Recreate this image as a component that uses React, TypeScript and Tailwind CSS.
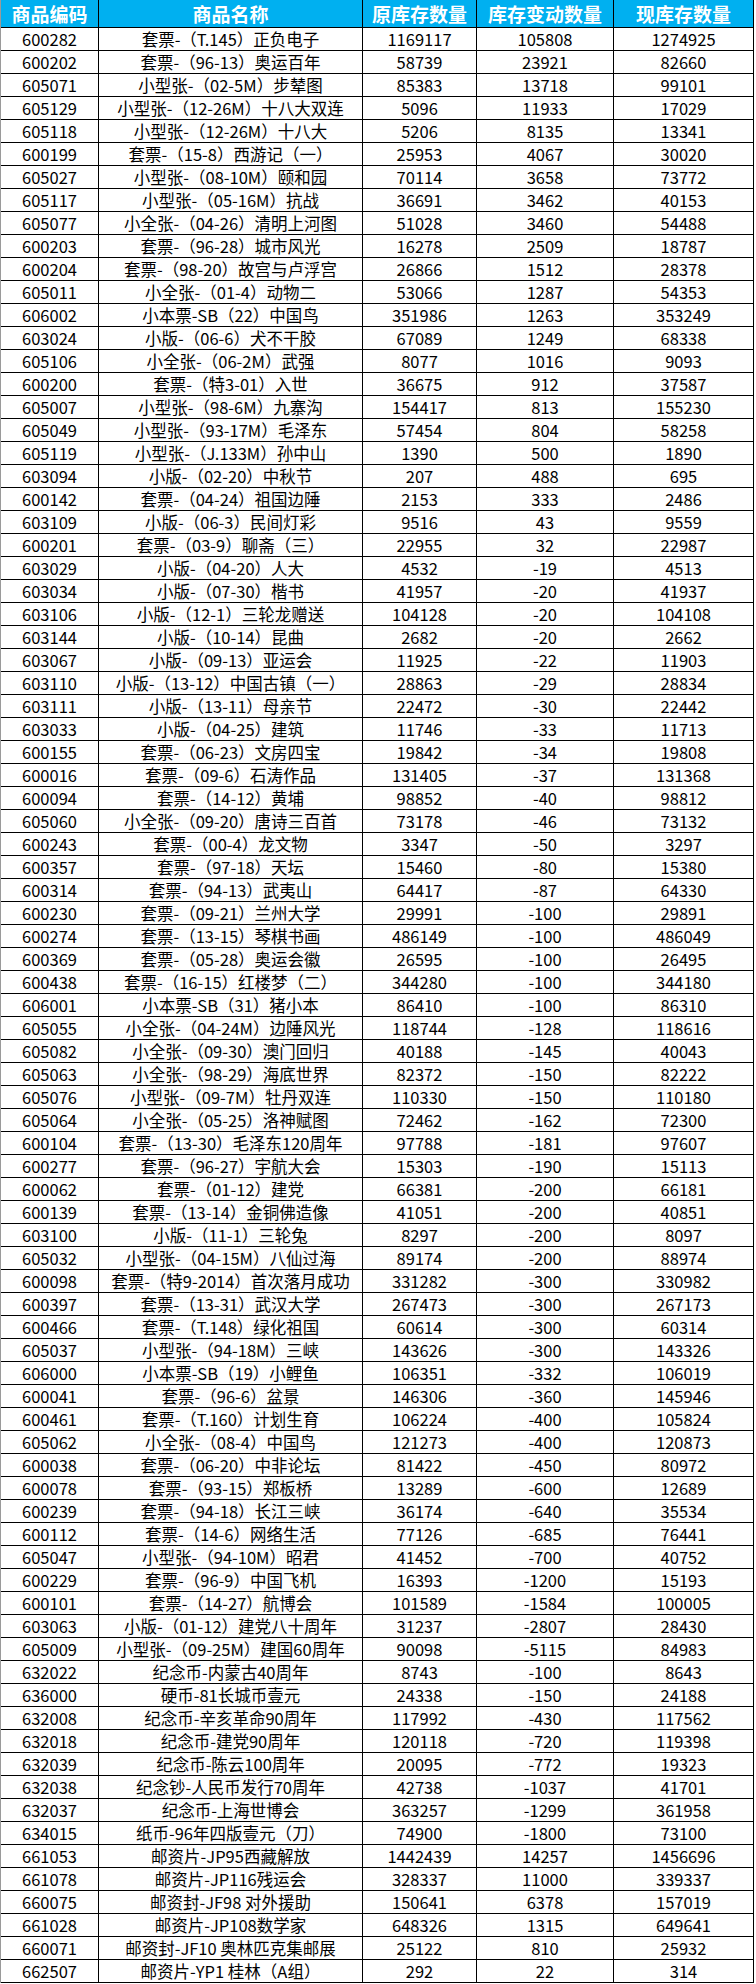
const rows: [string, string, number, number, number][] = [
  ['600282', '套票-（T.145）正负电子', 1169117, 105808, 1274925],
  ['600202', '套票-（96-13）奥运百年', 58739, 23921, 82660],
  ['605071', '小型张-（02-5M）步辇图', 85383, 13718, 99101],
  ['605129', '小型张-（12-26M）十八大双连', 5096, 11933, 17029],
  ['605118', '小型张-（12-26M）十八大', 5206, 8135, 13341],
  ['600199', '套票-（15-8）西游记（一）', 25953, 4067, 30020],
  ['605027', '小型张-（08-10M）颐和园', 70114, 3658, 73772],
  ['605117', '小型张-（05-16M）抗战', 36691, 3462, 40153],
  ['605077', '小全张-（04-26）清明上河图', 51028, 3460, 54488],
  ['600203', '套票-（96-28）城市风光', 16278, 2509, 18787],
  ['600204', '套票-（98-20）故宫与卢浮宫', 26866, 1512, 28378],
  ['605011', '小全张-（01-4）动物二', 53066, 1287, 54353],
  ['606002', '小本票-SB（22）中国鸟', 351986, 1263, 353249],
  ['603024', '小版-（06-6）犬不干胶', 67089, 1249, 68338],
  ['605106', '小全张-（06-2M）武强', 8077, 1016, 9093],
  ['600200', '套票-（特3-01）入世', 36675, 912, 37587],
  ['605007', '小型张-（98-6M）九寨沟', 154417, 813, 155230],
  ['605049', '小型张-（93-17M）毛泽东', 57454, 804, 58258],
  ['605119', '小型张-（J.133M）孙中山', 1390, 500, 1890],
  ['603094', '小版-（02-20）中秋节', 207, 488, 695],
  ['600142', '套票-（04-24）祖国边陲', 2153, 333, 2486],
  ['603109', '小版-（06-3）民间灯彩', 9516, 43, 9559],
  ['600201', '套票-（03-9）聊斋（三）', 22955, 32, 22987],
  ['603029', '小版-（04-20）人大', 4532, -19, 4513],
  ['603034', '小版-（07-30）楷书', 41957, -20, 41937],
  ['603106', '小版-（12-1）三轮龙赠送', 104128, -20, 104108],
  ['603144', '小版-（10-14）昆曲', 2682, -20, 2662],
  ['603067', '小版-（09-13）亚运会', 11925, -22, 11903],
  ['603110', '小版-（13-12）中国古镇（一）', 28863, -29, 28834],
  ['603111', '小版-（13-11）母亲节', 22472, -30, 22442],
  ['603033', '小版-（04-25）建筑', 11746, -33, 11713],
  ['600155', '套票-（06-23）文房四宝', 19842, -34, 19808],
  ['600016', '套票-（09-6）石涛作品', 131405, -37, 131368],
  ['600094', '套票-（14-12）黄埔', 98852, -40, 98812],
  ['605060', '小全张-（09-20）唐诗三百首', 73178, -46, 73132],
  ['600243', '套票-（00-4）龙文物', 3347, -50, 3297],
  ['600357', '套票-（97-18）天坛', 15460, -80, 15380],
  ['600314', '套票-（94-13）武夷山', 64417, -87, 64330],
  ['600230', '套票-（09-21）兰州大学', 29991, -100, 29891],
  ['600274', '套票-（13-15）琴棋书画', 486149, -100, 486049],
  ['600369', '套票-（05-28）奥运会徽', 26595, -100, 26495],
  ['600438', '套票-（16-15）红楼梦（二）', 344280, -100, 344180],
  ['606001', '小本票-SB（31）猪小本', 86410, -100, 86310],
  ['605055', '小全张-（04-24M）边陲风光', 118744, -128, 118616],
  ['605082', '小全张-（09-30）澳门回归', 40188, -145, 40043],
  ['605063', '小全张-（98-29）海底世界', 82372, -150, 82222],
  ['605076', '小型张-（09-7M）牡丹双连', 110330, -150, 110180],
  ['605064', '小全张-（05-25）洛神赋图', 72462, -162, 72300],
  ['600104', '套票-（13-30）毛泽东120周年', 97788, -181, 97607],
  ['600277', '套票-（96-27）宇航大会', 15303, -190, 15113],
  ['600062', '套票-（01-12）建党', 66381, -200, 66181],
  ['600139', '套票-（13-14）金铜佛造像', 41051, -200, 40851],
  ['603100', '小版-（11-1）三轮兔', 8297, -200, 8097],
  ['605032', '小型张-（04-15M）八仙过海', 89174, -200, 88974],
  ['600098', '套票-（特9-2014）首次落月成功', 331282, -300, 330982],
  ['600397', '套票-（13-31）武汉大学', 267473, -300, 267173],
  ['600466', '套票-（T.148）绿化祖国', 60614, -300, 60314],
  ['605037', '小型张-（94-18M）三峡', 143626, -300, 143326],
  ['606000', '小本票-SB（19）小鲤鱼', 106351, -332, 106019],
  ['600041', '套票-（96-6）盆景', 146306, -360, 145946],
  ['600461', '套票-（T.160）计划生育', 106224, -400, 105824],
  ['605062', '小全张-（08-4）中国鸟', 121273, -400, 120873],
  ['600038', '套票-（06-20）中非论坛', 81422, -450, 80972],
  ['600078', '套票-（93-15）郑板桥', 13289, -600, 12689],
  ['600239', '套票-（94-18）长江三峡', 36174, -640, 35534],
  ['600112', '套票-（14-6）网络生活', 77126, -685, 76441],
  ['605047', '小型张-（94-10M）昭君', 41452, -700, 40752],
  ['600229', '套票-（96-9）中国飞机', 16393, -1200, 15193],
  ['600101', '套票-（14-27）航博会', 101589, -1584, 100005],
  ['603063', '小版-（01-12）建党八十周年', 31237, -2807, 28430],
  ['605009', '小型张-（09-25M）建国60周年', 90098, -5115, 84983],
  ['632022', '纪念币-内蒙古40周年', 8743, -100, 8643],
  ['636000', '硬币-81长城币壹元', 24338, -150, 24188],
  ['632008', '纪念币-辛亥革命90周年', 117992, -430, 117562],
  ['632018', '纪念币-建党90周年', 120118, -720, 119398],
  ['632039', '纪念币-陈云100周年', 20095, -772, 19323],
  ['632038', '纪念钞-人民币发行70周年', 42738, -1037, 41701],
  ['632037', '纪念币-上海世博会', 363257, -1299, 361958],
  ['634015', '纸币-96年四版壹元（刀）', 74900, -1800, 73100],
  ['661053', '邮资片-JP95西藏解放', 1442439, 14257, 1456696],
  ['661078', '邮资片-JP116残运会', 328337, 11000, 339337],
  ['660075', '邮资封-JF98 对外援助', 150641, 6378, 157019],
  ['661028', '邮资片-JP108数学家', 648326, 1315, 649641],
  ['660071', '邮资封-JF10 奥林匹克集邮展', 25122, 810, 25932],
  ['662507', '邮资片-YP1 桂林（A组）', 292, 22, 314],
];

const headers = ['商品编码', '商品名称', '原库存数量', '库存变动数量', '现库存数量'];

const gridCols = 'grid grid-cols-[98px_264px_114px_137px_140px]';

export default function App() {
  return (
    <div className="w-[756px] bg-white font-['Noto_Sans_CJK_SC',sans-serif]">
      <div className="w-[754px] border-l border-[#9a9a9a]">
        <div className={`${gridCols} h-[28px] bg-[#00B0F0] border-b border-black`}>
          {headers.map((h) => (
            <div
              key={h}
              className="flex items-center justify-center border-r border-black text-[19px] font-bold leading-none text-white"
            >
              {h}
            </div>
          ))}
        </div>

        {rows.map(([code, name, before, change, after]) => (
          <div key={code + name} className={`${gridCols} h-[23px] border-b border-black text-[16.5px] leading-none text-black`}>
            <div className="flex items-center justify-center border-r border-black">{code}</div>
            <div className="flex items-center justify-center border-r border-black whitespace-nowrap">{name}</div>
            <div className="flex items-center justify-center border-r border-black">{before}</div>
            <div className="flex items-center justify-center border-r border-black">{change}</div>
            <div className="flex items-center justify-center border-r border-black">{after}</div>
          </div>
        ))}
      </div>
    </div>
  );
}
